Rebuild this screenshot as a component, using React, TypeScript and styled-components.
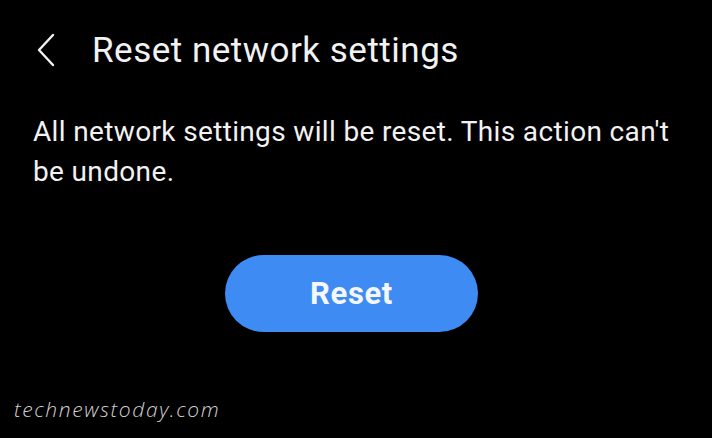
import React from "react";
import styled, { createGlobalStyle } from "styled-components";

const Global = createGlobalStyle`
  html, body { margin: 0; padding: 0; background: #000; }
  body { width: 712px; height: 438px; overflow: hidden; }
`;

const Screen = styled.div`
  width: 712px;
  height: 438px;
  background: #000;
  color: #f2f2f2;
  font-family: Roboto, "Noto Sans", sans-serif;
  display: flex;
  flex-direction: column;
  box-sizing: border-box;
`;

const Header = styled.div`
  display: flex;
  align-items: center;
  height: 64px;
  padding: 18px 0 0 36px;
  gap: 36px;
`;

const BackButton = styled.button`
  background: none;
  border: 0;
  padding: 0;
  width: 20px;
  height: 34px;
  display: flex;
  color: #f2f2f2;
`;

const Title = styled.h1`
  margin: 0;
  font-size: 35px;
  font-weight: 400;
  letter-spacing: 0.5px;
`;

const Message = styled.p`
  margin: 30px 0 0 33px;
  font-size: 28px;
  line-height: 40px;
  letter-spacing: 0.35px;
  width: 650px;
`;

const ButtonRow = styled.div`
  display: flex;
  justify-content: flex-start;
  padding-left: 225px;
  margin-top: 63px;
`;

const ResetButton = styled.button`
  width: 253px;
  height: 77px;
  border-radius: 39px;
  border: 0;
  background: #3e8bf3;
  color: #f4f7fb;
  font-family: Roboto, sans-serif;
  font-weight: 700;
  font-size: 31px;
  letter-spacing: 0.6px;
`;

const Watermark = styled.div`
  margin: 63px 0 0 14px;
  font-family: "Open Sans", sans-serif;
  font-style: italic;
  font-weight: 300;
  font-size: 21px;
  letter-spacing: 1.6px;
  color: #d0d0d0;
`;

export default function App() {
  return (
    <>
      <Global />
      <Screen>
        <Header>
          <BackButton aria-label="Back">
            <svg width="20" height="34" viewBox="0 0 20 34" fill="none">
              <path d="M17 2 L3 17 L17 32" stroke="#f2f2f2" strokeWidth="2.4" strokeLinecap="round" strokeLinejoin="round" />
            </svg>
          </BackButton>
          <Title>Reset network settings</Title>
        </Header>
        <Message>All network settings will be reset. This action can't be undone.</Message>
        <ButtonRow>
          <ResetButton>Reset</ResetButton>
        </ButtonRow>
        <Watermark>technewstoday.com</Watermark>
      </Screen>
    </>
  );
}
